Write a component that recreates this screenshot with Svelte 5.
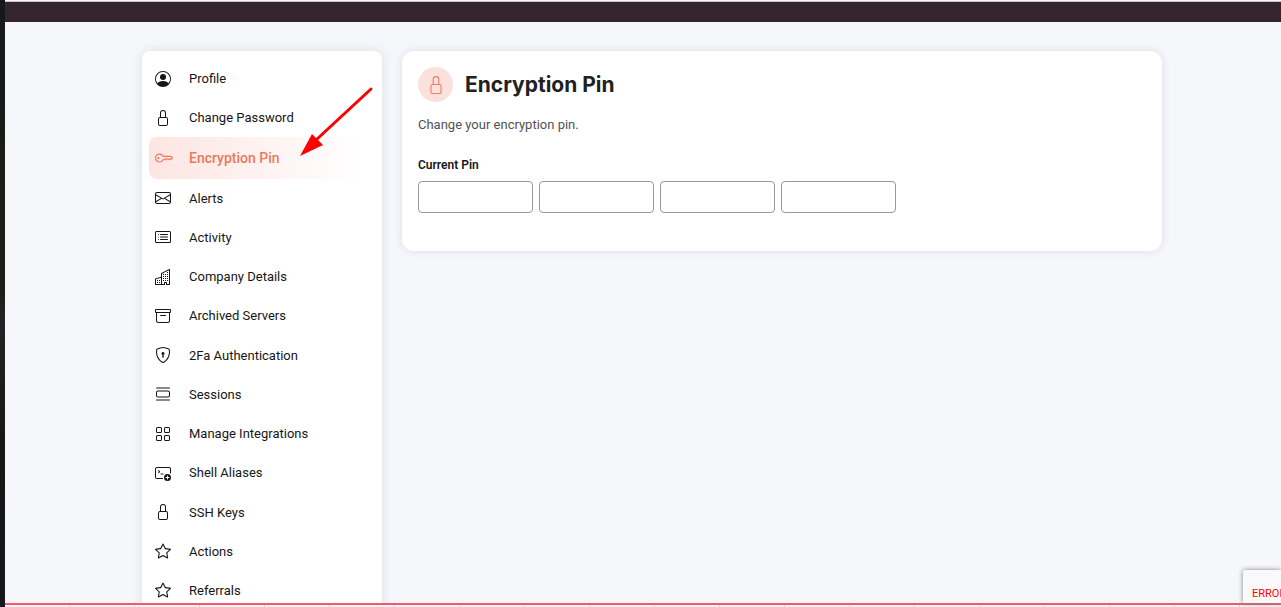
<script>
  const icons = {
    person: [
      "M11 6a3 3 0 1 1-6 0 3 3 0 0 1 6 0z",
      "M0 8a8 8 0 1 1 16 0A8 8 0 0 1 0 8zm8-7a7 7 0 0 0-5.468 11.37C3.242 11.226 4.805 10 8 10s4.757 1.225 5.468 2.37A7 7 0 0 0 8 1z",
    ],
    lock: [
      "M8 1a2 2 0 0 1 2 2v4H6V3a2 2 0 0 1 2-2zm3 6V3a3 3 0 0 0-6 0v4a2 2 0 0 0-2 2v5a2 2 0 0 0 2 2h6a2 2 0 0 0 2-2V9a2 2 0 0 0-2-2zM5 8h6a1 1 0 0 1 1 1v5a1 1 0 0 1-1 1H5a1 1 0 0 1-1-1V9a1 1 0 0 1 1-1z",
    ],
    key: [
      "M0 8a4 4 0 0 1 7.465-2H14a.5.5 0 0 1 .354.146l1.5 1.5a.5.5 0 0 1 0 .708l-1.5 1.5a.5.5 0 0 1-.708 0L13 9.207l-.646.647a.5.5 0 0 1-.708 0L11 9.207l-.646.647a.5.5 0 0 1-.708 0L9 9.207l-.646.647A.5.5 0 0 1 8 10h-.535A4 4 0 0 1 0 8zm4-3a3 3 0 1 0 2.712 4.285A.5.5 0 0 1 7.163 9h.63l.853-.854a.5.5 0 0 1 .708 0l.646.647.646-.647a.5.5 0 0 1 .708 0l.646.647.646-.647a.5.5 0 0 1 .708 0l.646.647.793-.793-1-1h-6.63a.5.5 0 0 1-.451-.285A3 3 0 0 0 4 5z",
      "M4 8a1 1 0 1 1-2 0 1 1 0 0 1 2 0z",
    ],
    envelope: [
      "M0 4a2 2 0 0 1 2-2h12a2 2 0 0 1 2 2v8a2 2 0 0 1-2 2H2a2 2 0 0 1-2-2V4zm2-1a1 1 0 0 0-1 1v.217l7 4.2 7-4.2V4a1 1 0 0 0-1-1H2zm13 2.383-4.758 2.855L15 11.114v-5.73zm-.034 6.878L9.271 8.82 8 9.583 6.728 8.82l-5.694 3.44A1 1 0 0 0 2 13h12a1 1 0 0 0 .966-.739zM1 11.114l4.758-2.876L1 5.383v5.73z",
    ],
    list: [
      "M14.5 3a.5.5 0 0 1 .5.5v9a.5.5 0 0 1-.5.5h-13a.5.5 0 0 1-.5-.5v-9a.5.5 0 0 1 .5-.5h13zm-13-1A1.5 1.5 0 0 0 0 3.5v9A1.5 1.5 0 0 0 1.5 14h13a1.5 1.5 0 0 0 1.5-1.5v-9A1.5 1.5 0 0 0 14.5 2h-13z",
      "M5 8a.5.5 0 0 1 .5-.5h7a.5.5 0 0 1 0 1h-7A.5.5 0 0 1 5 8zm0-2.5a.5.5 0 0 1 .5-.5h7a.5.5 0 0 1 0 1h-7a.5.5 0 0 1-.5-.5zm0 5a.5.5 0 0 1 .5-.5h7a.5.5 0 0 1 0 1h-7a.5.5 0 0 1-.5-.5zm-1-5a.5.5 0 1 1-1 0 .5.5 0 0 1 1 0zM4 8a.5.5 0 1 1-1 0 .5.5 0 0 1 1 0zm0 2.5a.5.5 0 1 1-1 0 .5.5 0 0 1 1 0z",
    ],
    building: [
      "M14.763.075A.5.5 0 0 1 15 .5v15a.5.5 0 0 1-.5.5h-3a.5.5 0 0 1-.5-.5V14h-1v1.5a.5.5 0 0 1-.5.5h-9a.5.5 0 0 1-.5-.5V10a.5.5 0 0 1 .342-.474L6 7.64V4.5a.5.5 0 0 1 .276-.447l8-4a.5.5 0 0 1 .487.022zM6 8.694 1 10.36V15h5V8.694zM7 15h2v-1.5a.5.5 0 0 1 .5-.5h2a.5.5 0 0 1 .5.5V15h2V1.309l-7 3.5V15z",
      "M2 11h1v1H2v-1zm2 0h1v1H4v-1zm-2 2h1v1H2v-1zm2 0h1v1H4v-1zm4-4h1v1H8V9zm2 0h1v1h-1V9zm-2 2h1v1H8v-1zm2 0h1v1h-1v-1zm2-2h1v1h-1V9zm0 2h1v1h-1v-1zM8 7h1v1H8V7zm2 0h1v1h-1V7zm2 0h1v1h-1V7zM8 5h1v1H8V5zm2 0h1v1h-1V5zm2 0h1v1h-1V5zm0-2h1v1h-1V3z",
    ],
    archive: [
      "M0 2a1 1 0 0 1 1-1h14a1 1 0 0 1 1 1v2a1 1 0 0 1-1 1v7.5a2.5 2.5 0 0 1-2.5 2.5h-9A2.5 2.5 0 0 1 1 12.5V5a1 1 0 0 1-1-1V2zm2 3v7.5A1.5 1.5 0 0 0 3.5 14h9a1.5 1.5 0 0 0 1.5-1.5V5H2zm13-3H1v2h14V2zM5 7.5a.5.5 0 0 1 .5-.5h5a.5.5 0 0 1 0 1h-5a.5.5 0 0 1-.5-.5z",
    ],
    shield: [
      "M5.338 1.59a61.44 61.44 0 0 0-2.837.856.481.481 0 0 0-.328.39c-.554 4.157.726 7.19 2.253 9.188a10.725 10.725 0 0 0 2.287 2.233c.346.244.652.42.893.533.12.057.218.095.293.118a.55.55 0 0 0 .101.025.615.615 0 0 0 .1-.025c.076-.023.174-.061.294-.118.24-.113.547-.29.893-.533a10.726 10.726 0 0 0 2.287-2.233c1.527-1.997 2.807-5.031 2.253-9.188a.48.48 0 0 0-.328-.39c-.651-.213-1.75-.56-2.837-.855C9.552 1.29 8.531 1.067 8 1.067c-.53 0-1.552.223-2.662.524zM5.072.56C6.157.265 7.31 0 8 0s1.843.265 2.928.56c1.11.3 2.229.655 2.887.87a1.54 1.54 0 0 1 1.044 1.262c.596 4.477-.787 7.795-2.465 9.99a11.775 11.775 0 0 1-2.517 2.453 7.159 7.159 0 0 1-1.048.625c-.28.132-.581.24-.829.24s-.548-.108-.829-.24a7.158 7.158 0 0 1-1.048-.625 11.777 11.777 0 0 1-2.517-2.453C1.928 10.487.545 7.169 1.141 2.692A1.54 1.54 0 0 1 2.185 1.43 62.456 62.456 0 0 1 5.072.56z",
      "M9.5 6.5a1.5 1.5 0 0 1-1 1.415l.385 1.99a.5.5 0 0 1-.491.595h-.788a.5.5 0 0 1-.49-.595l.384-1.99a1.5 1.5 0 1 1 2-1.415z",
    ],
    sessions: [
      "M3 4.5h10a2 2 0 0 1 2 2v3a2 2 0 0 1-2 2H3a2 2 0 0 1-2-2v-3a2 2 0 0 1 2-2zm0 1a1 1 0 0 0-1 1v3a1 1 0 0 0 1 1h10a1 1 0 0 0 1-1v-3a1 1 0 0 0-1-1H3zM1 2a.5.5 0 0 1 .5-.5h13a.5.5 0 0 1 0 1h-13A.5.5 0 0 1 1 2zm0 12a.5.5 0 0 1 .5-.5h13a.5.5 0 0 1 0 1h-13A.5.5 0 0 1 1 14z",
    ],
    grid: [
      "M1 2.5A1.5 1.5 0 0 1 2.5 1h3A1.5 1.5 0 0 1 7 2.5v3A1.5 1.5 0 0 1 5.5 7h-3A1.5 1.5 0 0 1 1 5.5v-3zM2.5 2a.5.5 0 0 0-.5.5v3a.5.5 0 0 0 .5.5h3a.5.5 0 0 0 .5-.5v-3a.5.5 0 0 0-.5-.5h-3zm6.5.5A1.5 1.5 0 0 1 10.5 1h3A1.5 1.5 0 0 1 15 2.5v3A1.5 1.5 0 0 1 13.5 7h-3A1.5 1.5 0 0 1 9 5.5v-3zm1.5-.5a.5.5 0 0 0-.5.5v3a.5.5 0 0 0 .5.5h3a.5.5 0 0 0 .5-.5v-3a.5.5 0 0 0-.5-.5h-3zM1 10.5A1.5 1.5 0 0 1 2.5 9h3A1.5 1.5 0 0 1 7 10.5v3A1.5 1.5 0 0 1 5.5 15h-3A1.5 1.5 0 0 1 1 13.5v-3zm1.5-.5a.5.5 0 0 0-.5.5v3a.5.5 0 0 0 .5.5h3a.5.5 0 0 0 .5-.5v-3a.5.5 0 0 0-.5-.5h-3zm6.5.5A1.5 1.5 0 0 1 10.5 9h3a1.5 1.5 0 0 1 1.5 1.5v3a1.5 1.5 0 0 1-1.5 1.5h-3A1.5 1.5 0 0 1 9 13.5v-3zm1.5-.5a.5.5 0 0 0-.5.5v3a.5.5 0 0 0 .5.5h3a.5.5 0 0 0 .5-.5v-3a.5.5 0 0 0-.5-.5h-3z",
    ],
    terminal: [
      "M2 3a1 1 0 0 0-1 1v8a1 1 0 0 0 1 1h5.500a.5.5 0 0 1 0 1H2a2 2 0 0 1-2-2V4a2 2 0 0 1 2-2h12a2 2 0 0 1 2 2v4a.5.5 0 0 1-1 0V4a1 1 0 0 0-1-1H2z",
      "M3.146 5.146a.5.5 0 0 1 .708 0L5.177 6.469a.25.25 0 0 1 0 .354L3.854 8.146a.5.5 0 1 1-.708-.708l.793-.792-.793-.792a.5.5 0 0 1 0-.708zM5.500 9a.5.5 0 0 1 .5-.5h2a.5.5 0 0 1 0 1H6a.5.5 0 0 1-.5-.5z",
      "M16 12.500a3.500 3.500 0 1 1-7 0 3.500 3.500 0 0 1 7 0zm-3-1.500a.5.5 0 0 0-1 0v1h-1a.5.5 0 0 0 0 1h1v1a.5.5 0 0 0 1 0v-1h1a.5.5 0 0 0 0-1h-1v-1z",
    ],
    star: [
      "M2.866 14.85c-.078.444.36.791.746.593l4.39-2.256 4.389 2.256c.386.198.824-.149.746-.592l-.83-4.73 3.522-3.356c.33-.314.16-.888-.282-.95l-4.898-.696L8.465.792a.513.513 0 0 0-.927 0L5.354 5.12l-4.898.696c-.441.062-.612.636-.283.95l3.523 3.356-.83 4.73zm4.905-2.767-3.686 1.894.694-3.957a.565.565 0 0 0-.163-.505L1.71 6.745l4.052-.576a.525.525 0 0 0 .393-.288L8 2.223l1.847 3.658a.525.525 0 0 0 .393.288l4.052.575-2.906 2.77a.565.565 0 0 0-.163.506l.694 3.957-3.686-1.894a.503.503 0 0 0-.461 0z",
    ],
  };

  const items = [
    { label: "Profile", icon: "person" },
    { label: "Change Password", icon: "lock" },
    { label: "Encryption Pin", icon: "key" },
    { label: "Alerts", icon: "envelope" },
    { label: "Activity", icon: "list" },
    { label: "Company Details", icon: "building" },
    { label: "Archived Servers", icon: "archive" },
    { label: "2Fa Authentication", icon: "shield" },
    { label: "Sessions", icon: "sessions" },
    { label: "Manage Integrations", icon: "grid" },
    { label: "Shell Aliases", icon: "terminal" },
    { label: "SSH Keys", icon: "lock" },
    { label: "Actions", icon: "star" },
    { label: "Referrals", icon: "star" },
  ];

  let active = $state("Encryption Pin");
  let pin = $state(["", "", "", ""]);
</script>

{#snippet icon(name)}
  <svg class="icon" viewBox="0 0 16 16" fill="currentColor" fill-rule="evenodd" aria-hidden="true">
    {#each icons[name] as d}
      <path {d} />
    {/each}
  </svg>
{/snippet}

<div class="desktop">
  <div class="screen">
    <header class="topbar"></header>

    <main>
      <nav class="sidebar">
        <ul>
          {#each items as item}
            <li>
              <a
                href="#{item.icon}"
                class:active={active === item.label}
                onclick={() => (active = item.label)}
              >
                <span class="icon-box">{@render icon(item.icon)}</span>
                {item.label}
              </a>
            </li>
          {/each}
        </ul>
        <svg class="arrow" viewBox="0 0 76 76" aria-hidden="true">
          <path d="M72 6 17 57" stroke="#f00" stroke-width="3" stroke-linecap="round" />
          <path d="M1 73 13 51 24 62z" fill="#f00" />
        </svg>
      </nav>

      <section class="card">
        <div class="card-head">
          <span class="badge">{@render icon("lock")}</span>
          <h1>Encryption Pin</h1>
        </div>
        <p>Change your encryption pin.</p>
        <label for="pin-0">Current Pin</label>
        <div class="pins">
          {#each pin as _, i}
            <input
              id="pin-{i}"
              type="password"
              maxlength="1"
              aria-label={i ? `Current Pin digit ${i + 1}` : null}
              bind:value={pin[i]}
            />
          {/each}
        </div>
      </section>
    </main>

    <div class="captcha">ERROR</div>
    <footer></footer>
  </div>
</div>

<style>
  .desktop {
    display: flex;
    height: 100vh;
    padding-left: 5px;
    box-sizing: border-box;
    overflow: hidden;
    background: linear-gradient(#181818, #17191c 12%, #1c1d14 30%, #1d1d15 48%, #242424 52%, #171615 75%, #15181b);
    font-family: Roboto, "Liberation Sans", sans-serif;
    font-size: 13px;
    color: #161616;
  }

  .screen {
    position: relative;
    flex: 1;
    min-width: 0;
    display: flex;
    flex-direction: column;
    background: #f5f7fb;
  }

  .topbar {
    height: 20px;
    flex-shrink: 0;
    margin-top: 1px;
    border-top: 1px solid #c9c5cb;
    background: #35252f;
  }

  main {
    flex: 1;
    min-height: 0;
    display: flex;
    align-items: flex-start;
    gap: 20px;
    padding: 29px 119px 0 137px;
    overflow: hidden;
  }

  .sidebar {
    position: relative;
    width: 240px;
    flex-shrink: 0;
    box-sizing: border-box;
    padding: 8px 7px 20px;
    border-radius: 8px;
    background: #fff;
    box-shadow: 0 0 12px rgba(40, 40, 70, 0.12);
  }

  ul {
    display: flex;
    flex-direction: column;
    min-height: 551px;
    margin: 0;
    padding: 0;
    list-style: none;
  }

  li {
    flex: 1 0 auto;
    display: flex;
  }

  a {
    flex: 1;
    display: flex;
    align-items: center;
    min-height: 39px;
    padding-left: 6px;
    border-radius: 8px;
    color: inherit;
    text-decoration: none;
  }

  a.active {
    min-height: 41px;
    font-size: 14px;
    font-weight: 500;
    color: #ea7a5c;
    background: linear-gradient(90deg, #fce5e1, #fff 95%);
  }

  .icon-box {
    display: flex;
    width: 34px;
  }

  .icon {
    width: 16px;
    height: 16px;
  }

  .active .icon {
    width: 18px;
    height: 18px;
  }

  .arrow {
    position: absolute;
    top: 32px;
    left: 157px;
    width: 76px;
    height: 76px;
    pointer-events: none;
  }

  .card {
    flex: 1;
    min-width: 0;
    padding: 16px 16px 38px;
    border-radius: 12px;
    background: #fff;
    box-shadow: 0 0 8px rgba(40, 40, 70, 0.12);
  }

  .card-head {
    display: flex;
    align-items: center;
    gap: 12px;
  }

  .badge {
    display: flex;
    align-items: center;
    justify-content: center;
    width: 35px;
    height: 35px;
    border-radius: 50%;
    color: #ee7d64;
    background: #fae1dc;
  }

  .badge .icon {
    width: 18px;
    height: 18px;
  }

  h1 {
    margin: 0;
    font-family: Inter, "Liberation Sans", sans-serif;
    font-size: 21px;
    font-weight: 700;
    line-height: 32px;
    color: #212121;
  }

  p {
    margin: 13px 0 22px;
    line-height: 20px;
    color: #525252;
  }

  label {
    display: block;
    margin-bottom: 8px;
    font-size: 12px;
    font-weight: 600;
    line-height: 16px;
  }

  .pins {
    display: flex;
    gap: 6px;
  }

  input {
    width: 115px;
    height: 32px;
    box-sizing: border-box;
    border: 1px solid #999;
    border-radius: 4px;
    background: #fff;
  }

  .captcha {
    position: absolute;
    right: 0;
    bottom: 4px;
    width: 38px;
    height: 33px;
    box-sizing: border-box;
    padding: 16px 0 0 9px;
    overflow: hidden;
    border-radius: 2px 0 0 0;
    background: #f9f9f9;
    box-shadow: 0 0 5px #808080;
    font-size: 11px;
    line-height: 16px;
    color: #f00;
  }

  footer {
    height: 2px;
    flex-shrink: 0;
    border-top: 2px solid #f9566a;
    background: repeating-linear-gradient(90deg, #f7f5f5 0 64px, #dcdada 64px 65px);
  }
</style>
